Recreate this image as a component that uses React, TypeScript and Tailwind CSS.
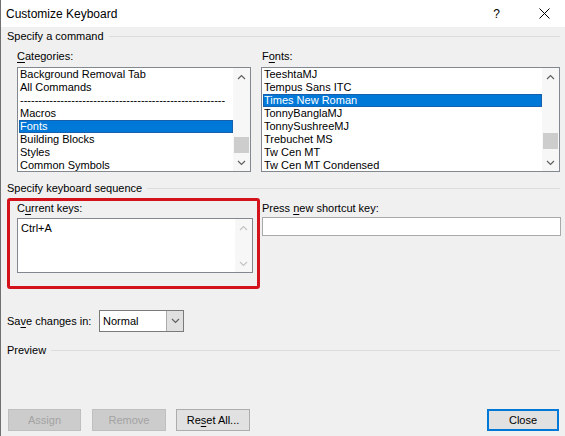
import type { ReactNode } from 'react'

const categories = [
  'Background Removal Tab',
  'All Commands',
  '--------------------------------------------------------',
  'Macros',
  'Fonts',
  'Building Blocks',
  'Styles',
  'Common Symbols',
]

const fonts = [
  'TeeshtaMJ',
  'Tempus Sans ITC',
  'Times New Roman',
  'TonnyBanglaMJ',
  'TonnySushreeMJ',
  'Trebuchet MS',
  'Tw Cen MT',
  'Tw Cen MT Condensed',
]

function Chevron({ up, dim }: { up?: boolean; dim?: boolean }) {
  return (
    <svg width="9" height="6" viewBox="0 0 9 6" className="block">
      <polyline
        points={up ? '1,5 4.5,1.5 8,5' : '1,1 4.5,4.5 8,1'}
        fill="none"
        stroke={dim ? '#c4c4c4' : '#606060'}
        strokeWidth="1.2"
      />
    </svg>
  )
}

function ScrollBar({ above, below, dim }: { above?: number; below?: number; dim?: boolean }) {
  return (
    <div className="flex w-[17px] shrink-0 flex-col bg-[#f7f7f7]">
      <div className="flex h-[17px] items-center justify-center">
        <Chevron up dim={dim} />
      </div>
      {above !== undefined ? (
        <>
          <div style={{ height: above }} />
          <div className="mx-[1px] h-[16px] bg-[#cdcdcd]" />
          <div className="flex-1" style={{ minHeight: below }} />
        </>
      ) : (
        <div className="flex-1" />
      )}
      <div className="flex h-[17px] items-center justify-center">
        <Chevron dim={dim} />
      </div>
    </div>
  )
}

function ListBox({ items, selected, thumbTop, thumbBottom }: { items: string[]; selected: string; thumbTop: number; thumbBottom: number }) {
  return (
    <div className="flex h-[105px] overflow-hidden border border-[#828790] bg-white">
      <div className="min-w-0 flex-1">
        {items.map((it) => (
          <div
            key={it}
            className={`ml-[1px] h-[13px] whitespace-nowrap pl-[1px] leading-[13px] ${
              it === selected ? 'bg-[#0078d7] text-white outline outline-1 -outline-offset-1 outline-[#1660ad]' : ''
            }`}
          >
            {it}
          </div>
        ))}
      </div>
      <ScrollBar above={thumbTop} below={thumbBottom} />
    </div>
  )
}

function GroupHeader({ children }: { children: ReactNode }) {
  return (
    <div className="flex h-[14px] items-center gap-[5px]">
      <span className="whitespace-nowrap leading-[14px]">{children}</span>
      <div className="h-px flex-1 bg-[#dcdcdc]" />
    </div>
  )
}

function Btn({ children, disabled, primary, className = '' }: { children: ReactNode; disabled?: boolean; primary?: boolean; className?: string }) {
  return (
    <div
      className={`flex h-[22px] items-center justify-center ${className} ${
        disabled
          ? 'border border-[#bfbfbf] bg-[#cccccc] text-[#a3a3a3]'
          : primary
            ? 'border-2 border-[#0078d7] bg-[#e1e1e1]'
            : 'border border-[#adadad] bg-[#e1e1e1]'
      }`}
    >
      {children}
    </div>
  )
}

export default function App() {
  return (
    <div className="flex h-[436px] w-[565px] flex-col overflow-hidden border-l border-[#707070] bg-[#f0f0f0] font-['Liberation_Sans',Arial,sans-serif] text-[11px] text-black">
      {/* title bar */}
      <div className="flex h-[27px] shrink-0 items-center bg-white pl-[5px] pr-[15px]">
        <span className="text-[12px]">Customize Keyboard</span>
        <span className="ml-auto mr-[39px] text-[12px]">?</span>
        <svg width="11" height="11" viewBox="0 0 11 11">
          <path d="M0.5 0.5 L10.5 10.5 M10.5 0.5 L0.5 10.5" stroke="#000" strokeWidth="1" />
        </svg>
      </div>

      <div className="flex flex-1 flex-col pl-[6px] pr-[5px]">
        <div className="mt-[2px]">
          <GroupHeader>Specify a command</GroupHeader>
        </div>

        <div className="mt-[6px] grid grid-cols-[234px_1fr] gap-x-[11px] pl-[10px]">
          <div className="h-[14px] leading-[14px]">
            <span className="underline underline-offset-2">C</span>ategories:
          </div>
          <div className="h-[14px] leading-[14px]">
            F<span className="underline underline-offset-2">o</span>nts:
          </div>
          <div className="mt-[4px]">
            <ListBox items={categories} selected="Fonts" thumbTop={52} thumbBottom={1} />
          </div>
          <div className="mt-[4px] -ml-px">
            <ListBox items={fonts} selected="Times New Roman" thumbTop={48} thumbBottom={3} />
          </div>
        </div>

        <div className="mt-[9px]">
          <GroupHeader>Specify keyboard sequence</GroupHeader>
        </div>

        <div className="mt-[3px] flex">
          <div className="w-[253px] shrink-0 rounded-[3px] border-[3px] border-[#d3121c] pb-[13px] pl-[7px] pr-[4px]">
            <div className="h-[14px] leading-[14px]">
              C<span className="underline underline-offset-2">u</span>rrent keys:
            </div>
            <div className="mt-[3px] flex h-[55px] border border-[#828790] bg-white">
              <div className="flex-1 pl-[3px] pt-[3px] leading-[13px]">Ctrl+A</div>
              <ScrollBar dim />
            </div>
          </div>
          <div className="ml-[2px] flex-1 pt-[3px]">
            <div className="h-[14px] leading-[14px]">
              Press <span className="underline underline-offset-2">n</span>ew shortcut key:
            </div>
            <div className="mr-[-1px] mt-[2px] h-[19px] border border-[#a9a9a9] bg-white" />
          </div>
        </div>

        <div className="mt-[21px] flex items-center">
          <span className="w-[92px]">
            Sa<span className="underline underline-offset-2">v</span>e changes in:
          </span>
          <div className="flex h-[22px] w-[85px] border border-[#7a7a7a] bg-white">
            <div className="flex flex-1 items-center pl-[3px]">Normal</div>
            <div className="flex w-[17px] items-center justify-center border-l border-[#adadad] bg-[#e0e0e0]">
              <Chevron />
            </div>
          </div>
        </div>

        <div className="mt-[11px]">
          <GroupHeader>Preview</GroupHeader>
        </div>

        <div className="mt-[52px] flex">
          <Btn disabled className="ml-[1px] w-[73px]">Assign</Btn>
          <Btn disabled className="ml-[11px] w-[74px]">Remove</Btn>
          <Btn className="ml-[10px] w-[74px]">
            <span>
              Re<span className="underline underline-offset-2">s</span>et All...
            </span>
          </Btn>
          <Btn primary className="ml-auto mr-[1px] w-[72px]">Close</Btn>
        </div>
      </div>
    </div>
  )
}
